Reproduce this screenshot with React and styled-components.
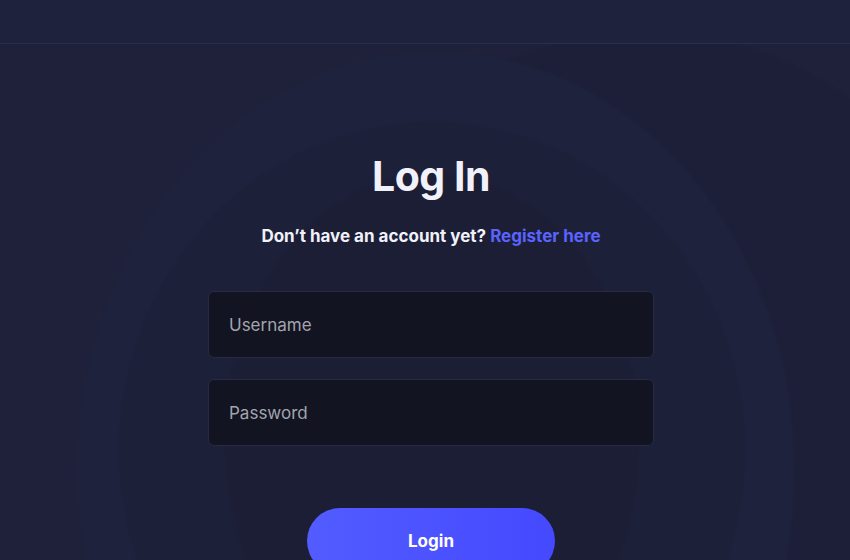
import React from 'react'
import styled, { createGlobalStyle } from 'styled-components'

const GlobalStyle = createGlobalStyle`
  * { box-sizing: border-box; }
  html, body { margin: 0; padding: 0; height: 100%; }
  body {
    background: #1e2139;
    font-family: Inter, "Noto Sans", sans-serif;
  }
`

const App = () =>
  <>
    <GlobalStyle />
    <Page>
      <TopBar />
      <Main>
        <Title>Log In</Title>
        <Subtitle>
          Don’t have an account yet? <RegisterLink href="#">Register here</RegisterLink>
        </Subtitle>
        <Form onSubmit={e => e.preventDefault()}>
          <Field type="text" placeholder="Username" />
          <Field type="password" placeholder="Password" />
          <SubmitButton type="submit">Login</SubmitButton>
        </Form>
      </Main>
    </Page>
  </>

export default App

/* STYLES */
const Page = styled.div`
  width: 100%;
  height: 100vh;
  overflow: hidden;
  display: flex;
  flex-direction: column;
  background-color: #1e2139;
  background-image:
    radial-gradient(ellipse 210px 270px at 432px 440px, #1b1e35 0%, #1b1e35 98%, transparent 100%),
    radial-gradient(ellipse 315px 330px at 432px 450px, #1d2039 0%, #1d2039 99%, transparent 100%),
    radial-gradient(ellipse 360px 420px at 436px 470px, #1f223c 0%, #1f223c 99%, transparent 100%),
    radial-gradient(ellipse 340px 330px at 646px 360px, #1c1f37 0%, #1c1f37 99%, transparent 100%);
`

const TopBar = styled.header`
  height: 44px;
  flex-shrink: 0;
  background: #1f223d;
  border-bottom: 1px solid #2b2e4a;
`

const Main = styled.main`
  display: flex;
  flex-direction: column;
  align-items: center;
  padding: 107px 0 0 12px;
`

const Title = styled.h1`
  margin: 0;
  font-size: 41px;
  font-weight: 700;
  line-height: 50px;
  color: #f1f1fa;
  letter-spacing: -0.5px;
`

const Subtitle = styled.p`
  margin: 25px 0 0;
  font-size: 17px;
  font-weight: 700;
  line-height: 20px;
  color: #f1f1fa;
  letter-spacing: 0;
`

const RegisterLink = styled.a`
  color: #5a63ff;
  text-decoration: none;
`

const Form = styled.form`
  display: flex;
  flex-direction: column;
  align-items: center;
  gap: 21px;
  margin-top: 45px;
`

const Field = styled.input`
  width: 446px;
  height: 67px;
  padding: 0 20px;
  border: 1px solid #272a42;
  border-radius: 6px;
  background: #121421;
  color: #e6e6ef;
  font-family: Inter, "Noto Sans", sans-serif;
  font-size: 17px;
  outline: none;
  &::placeholder {
    color: #a3a4ae;
  }
`

const SubmitButton = styled.button`
  width: 248px;
  height: 66px;
  margin-top: 41px;
  border: none;
  border-radius: 33px;
  background: linear-gradient(90deg, #525cff 0%, #4549ff 100%);
  color: #ffffff;
  font-family: Inter, "Noto Sans", sans-serif;
  font-size: 17px;
  font-weight: 700;
  cursor: pointer;
`
